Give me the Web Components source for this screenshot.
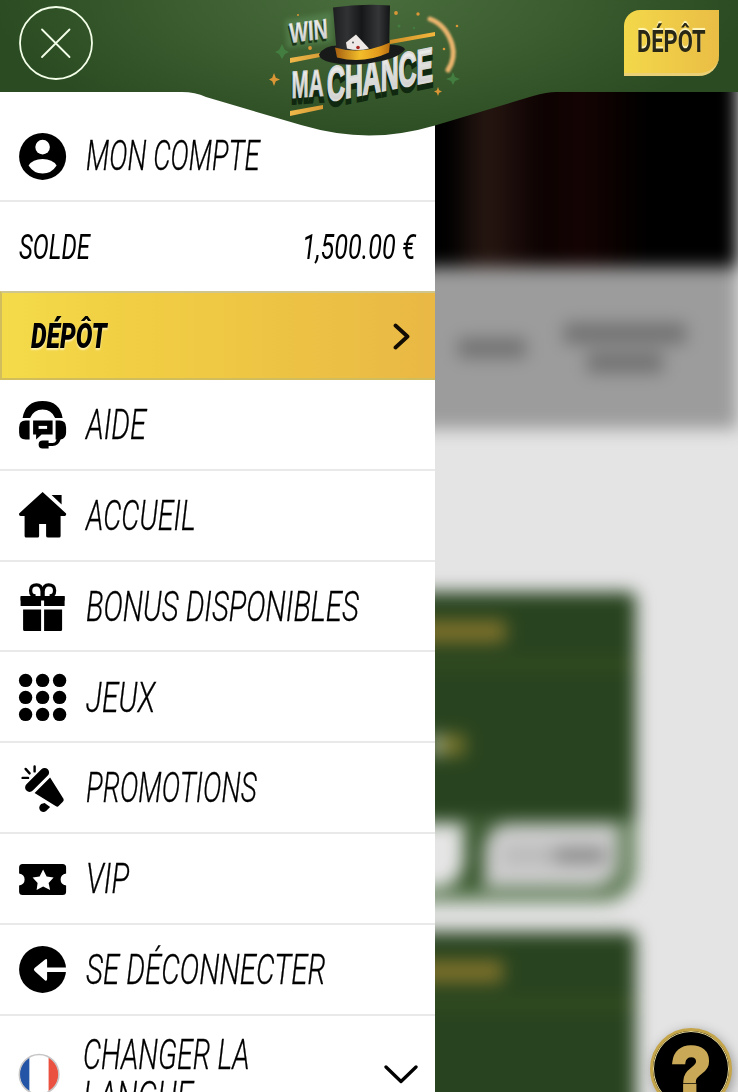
<!DOCTYPE html>
<html lang="fr">
<head>
<meta charset="utf-8">
<title>Win Ma Chance</title>
<style>
html,body{margin:0;height:1092px;overflow:hidden;background:#e4e4e4;font-family:Roboto,"Liberation Sans",sans-serif;color:#000}
</style>
</head>
<body>
<casino-app></casino-app>
<script>
const make=(name,html,init)=>customElements.define(name,class extends HTMLElement{
  connectedCallback(){
    if(this.shadowRoot)return;
    this.attachShadow({mode:'open'}).innerHTML=html;
    if(init)init(this,this.shadowRoot);
  }
});

/* Condenses its text to the width given in the w attribute */
make('fit-text',`<style>
:host{display:block;line-height:1;white-space:nowrap;flex:none}
span{display:inline-block;transform-origin:0 50%}
</style><span><slot></slot></span>`,(el,root)=>{
  const w=+el.getAttribute('w'),s=root.querySelector('span');
  el.style.width=w+'px';
  s.style.transform='scaleX('+w/s.offsetWidth+')';
});

make('brand-logo',`<style>:host{display:block;width:210px;height:135px}svg{display:block;overflow:visible}
text{font-family:"Liberation Sans",sans-serif;font-weight:700}</style>
<svg width="210" height="135" viewBox="0 0 210 135">
<defs>
<linearGradient id="gold"><stop offset="0" stop-color="#f0b84a"/><stop offset=".5" stop-color="#b8791c"/><stop offset="1" stop-color="#f4b63c"/></linearGradient>
<linearGradient id="band"><stop offset="0" stop-color="#a45f10"/><stop offset=".45" stop-color="#f3bd2a"/><stop offset=".8" stop-color="#e29a1c"/><stop offset="1" stop-color="#b66c10"/></linearGradient>
<linearGradient id="hat"><stop offset="0" stop-color="#1d1e1f"/><stop offset=".25" stop-color="#303233"/><stop offset=".5" stop-color="#161718"/><stop offset=".8" stop-color="#343638"/><stop offset="1" stop-color="#131415"/></linearGradient>
<linearGradient id="txt" x2="0" y2="1"><stop offset="0" stop-color="#f4f4f2"/><stop offset="1" stop-color="#c9cac8"/></linearGradient>
<filter id="soft" x="-30%" y="-30%" width="160%" height="160%"><feGaussianBlur stdDeviation="2.5"/></filter>
<filter id="tiny" x="-20%" y="-20%" width="140%" height="140%"><feGaussianBlur stdDeviation=".8"/></filter>
</defs>
<path d="M25 20L72 12V42L27 48Z" fill="#5a8a54" opacity=".6" filter="url(#soft)"/>
<path d="M30 58L60 53V57L30 63ZM130 40L175 32V36L130 44ZM30 111L63 105V109L30 116Z" fill="url(#gold)"/>
<path d="M170 19Q186 25 192 44Q196 58 188 70" fill="none" stroke="#e9b46d" stroke-width="5" stroke-linecap="round" filter="url(#tiny)"/>
<g fill="#db9635"><path d="M14 73l1.800 4.800L20 79.500l-4.200 1.800L14 86l-1.800-4.700L9 79.500l3.200-1.700zM178 87l1.200 3.300 2.800 1.200-2.800 1.200-1.200 3.300-1.200-3.300-2.800-1.200 2.800-1.200z"/><circle cx="136" cy="13" r="1.900"/><circle cx="158" cy="14" r="1.700"/><circle cx="50" cy="48" r="1.900"/><circle cx="197" cy="26" r="1.300"/><circle cx="184" cy="49" r="1.300"/><circle cx="38" cy="15" r="1"/></g>
<g fill="#437d40"><path d="M22 44l3 6 4 2-4 2-3 5-3-5-4-2 4-2zM193 72l2 5 5 2-5 2-2 4-2-4-5-2 5-2z"/><circle cx="139" cy="26" r="1.500"/><circle cx="154" cy="28" r="1.200"/></g>
<g transform="translate(30 43) skewY(-8) skewX(3)" font-size="28"><text y="2.500" x="-1" textLength="38" lengthAdjust="spacingAndGlyphs" fill="#1a3516" stroke="#1a3516">WIN</text><text textLength="38" lengthAdjust="spacingAndGlyphs" fill="url(#txt)" stroke="#dcdddb" stroke-width=".4">WIN</text></g>
<g transform="translate(31.500 98) skewY(-4)" font-size="38"><text y="5" x="0" textLength="32" lengthAdjust="spacingAndGlyphs" fill="#10280f" stroke="#10280f" stroke-width="4">MA</text><text textLength="32" lengthAdjust="spacingAndGlyphs" fill="url(#txt)" stroke="#d4d5d3" stroke-width="1">MA</text></g>
<g transform="translate(67 101.500) skewY(-11)" font-size="48"><text y="5" x="0" textLength="106" lengthAdjust="spacingAndGlyphs" fill="#10280f" stroke="#10280f" stroke-width="4">CHANCE</text><text textLength="106" lengthAdjust="spacingAndGlyphs" fill="url(#txt)" stroke="#d9dad8" stroke-width="2.200">CHANCE</text></g>
<g transform="translate(0 1.500)">
<path d="M59 53Q64 44 78 44L127 43Q143 43 145 48Q139 56 119 60Q94 66 71 61Q59 58 59 53Z" fill="#181a1a"/>
<path d="M73 6Q100 2 130 4L129 51Q102 63 77 55Z" fill="url(#hat)"/>
<path d="M75 46Q101 54 130 41L129 51Q103 63 77 56Z" fill="url(#band)"/>
<path d="M86 41L96 33L109 47Q98 50 87 47Z" fill="#eee9e6"/><circle cx="98" cy="46" r="1.800" fill="#a82520"/><circle cx="93" cy="41" r="1" fill="#555"/>
</g>
</svg>`);

make('site-header',`<style>
:host{display:block;position:absolute;inset:0 0 auto;height:136px;z-index:3}
.bg{position:absolute;inset:0}
.bar{position:relative;display:grid;grid-template-columns:1fr 210px 1fr;height:92px;padding:0 19px;align-items:start}
.close{margin-top:6px}
.dep{box-sizing:border-box;justify-self:end;margin-top:10px;width:95px;height:66px;border-radius:16px 0 20px 0;background:linear-gradient(90deg,#f3d84a,#eabd45);border-bottom:3px solid #e9cf76;display:flex;justify-content:center;padding-top:17px;color:#292716;font:700 30.500px Roboto;text-shadow:0 -2px 1px #fff6c0}
brand-logo{margin-left:-4px}
</style>
<svg class="bg" width="738" height="136"><defs><radialGradient id="g" gradientUnits="userSpaceOnUse" cx="369" cy="-5" r="380" gradientTransform="translate(369 -5) scale(1 .4) translate(-369 5)"><stop offset="0" stop-color="#4a6d3e"/><stop offset=".5" stop-color="#3b5d2f"/><stop offset="1" stop-color="#2b4b22"/></radialGradient></defs>
<path d="M0 0H738V92H556Q547 92 533 96L435 125.500Q401 135.500 369 135.500Q337 135.500 301 125L206 97Q195 92 182 92H0Z" fill="url(#g)"/></svg>
<div class="bar">
<svg class="close" width="74" height="74" fill="none" stroke="#f3ffe8" stroke-linecap="round"><circle cx="37" cy="37" r="36" stroke-width="1.800"/><path d="M23 23.500L50.500 51M50.500 23.500L23 51" stroke-width="1.800"/></svg>
<brand-logo></brand-logo>
<div class="dep"><fit-text w="69">DÉPÔT</fit-text></div>
</div>`);

const icons={
user:'<circle cx="24" cy="24" r="23.500"/><circle cx="24" cy="14.700" r="7.300" fill="#fff"/><path d="M10 33Q14 26.500 24 26.500T38 33Q33 41 24 41T10 33Z" fill="#fff"/>',
help:'<path d="M4 17.500Q7 .7 24 .7T44 17.500H36.500Q33 9 24 9T11.500 17.500Z"/><path d="M11 20v19H7Q.5 39 .5 32V27Q.5 20 7 20ZM37 20h4Q47.500 20 47.500 27v5q0 6-5.500 7Q40 45.500 34 45.500h-4V48H24q-4 0-4-4t4-4h6v2.500h4Q37 42.500 38 39H37ZM14.500 20H34V34H23L17.500 39V34H14.500Z"/><path d="M20 25.500h8.500v3H20Z" fill="#fff"/>',
home:'<path d="M24 .7L47.500 22Q48 24.700 46 24.700H42V44.500Q42 46 40.500 46H29.500Q27.500 46 27.500 44.500V32.500H20.500V44.500Q20.500 46 19 46H7.500Q6 46 6 44.500V24.700H2Q0 24.700 .5 22ZM33 3.500H43V13Z"/>',
gift:'<path d="M3 13.500H22.500V23.500H2V14.500ZM25.500 13.500H45.500L46 14.500V23.500H25.500ZM4.500 27H22.500V48.500H6Q4.500 48.500 4.500 47ZM25.500 27H43.500V47Q43.500 48.500 42 48.500H25.500Z"/><path d="M2 13.500H46V18H2Z"/><path d="M17 13.500Q12 13.500 12 8Q12 2.500 18 2.500Q23 2.500 23.500 9V13.500M31 13.500Q36 13.500 36 8Q36 2.500 30 2.500Q25 2.500 24.500 9V13.500" fill="none" stroke="#000" stroke-width="3.300"/>',
games:[7,24,41].map(y=>[7,24,41].map(x=>`<circle cx="${x}" cy="${y}" r="6.700"/>`).join('')).join(''),
promo:'<path d="M11 23L26 8" fill="none" stroke="#000" stroke-width="9" stroke-linecap="round"/><path d="M16 28.500L31.500 13L45 34.500Q45.500 36.500 44 37.500L40 41.500Q39 43 37 41.500ZM22.500 39.500L26 38.500L31.500 42.500L27.500 46.500Q25 48.500 22 46.500Q19 43 22.500 39.500Z"/><path d="M16 2V7M7 4.500L11 9M4 13.500H9.500" fill="none" stroke="#000" stroke-width="2.400" stroke-linecap="round"/>',
vip:'<path d="M4 8.500H44Q47.500 8.500 47.500 12V18Q42 19 42 24T47.500 30V36Q47.500 39.500 44 39.500H4Q.5 39.500 .5 36V30Q6 29 6 24T.5 18V12Q.5 8.500 4 8.500Z"/><path d="M24.500 14L28 21L35 22L30 27.500L31.500 34.500L24.500 31L18 34.500L19 27.500L14 22L21 21Z" fill="#fff"/>',
out:'<circle cx="24" cy="24" r="23.500"/><path d="M48 22H28.500V15Q28.500 13 26.500 14L16 22.500Q14.500 24 16 25.500L26.500 35Q28.500 36 28.500 33V26.500H48Z" fill="#fff"/>',
flag:'<defs><clipPath id="c"><circle cx="20.500" cy="23" r="19.500"/></clipPath></defs><g clip-path="url(#c)"><path d="M0 3H11V43H0Z" fill="#2454a5"/><path d="M11 3H30V43H11Z" fill="#fff"/><path d="M30 3H42V43H30Z" fill="#eb5140"/></g><circle cx="20.500" cy="23" r="19.800" fill="none" stroke="#c7c5c5" stroke-width="1.500"/>'
};
make('menu-icon',`<style>:host{display:block;width:48px;height:48px;flex:none}svg{display:block;overflow:visible}</style><svg width="48" height="48" viewBox="-.6 -.4 48 48"></svg>`,(el,r)=>{r.querySelector('svg').innerHTML=icons[el.getAttribute('name')]});

make('menu-row',`<style>
:host{box-sizing:border-box;display:flex;align-items:center;height:90.830px;padding:0 18px;border-bottom:2px solid #e9e9e9;font-size:41.500px;font-style:italic;font-weight:300;-webkit-text-stroke:.3px #000}
.label{padding:1px 0 0 20px;flex:1}
</style><slot name="icon"></slot><div class="label"><slot></slot></div><slot name="end"></slot>`,(el,r)=>{
  r.querySelector('slot').innerHTML='<menu-icon name="'+el.getAttribute('icon')+'"></menu-icon>';
});

make('side-menu',`<style>
:host{box-sizing:border-box;display:flex;flex-direction:column;position:relative;z-index:2;width:435px;height:1092px;padding-top:92px;background:#fff;overflow:hidden}
menu-row{flex:none}
.account{height:110px;padding-top:19px}
.balance,.deposit{box-sizing:border-box;display:flex;flex:none;align-items:center;justify-content:space-between;font-style:italic}
.balance{height:88.500px;padding:1px 19px 0 19px;font-size:34.500px;font-weight:400}
.deposit{height:89.500px;border:2px solid #d2bd5c;border-right:0;border-top-color:#cfc58e;background:linear-gradient(90deg,#f4db49,#f1ce43 30%,#e9b845);padding:2px 25px 0 29px;font-size:35px;font-weight:900;text-shadow:0 2px 2px #fff1ae}
.lang{height:118px;border:0}
.lang svg{flex:none;margin-right:-1px}
.two{display:grid;gap:.5px;margin-left:-3px}
</style>
<menu-row class="account" icon="user"><fit-text w="174">MON COMPTE</fit-text></menu-row>
<div class="balance"><fit-text w="71">SOLDE</fit-text><fit-text w="114">1,500.00 €</fit-text></div>
<div class="deposit"><fit-text w="76">DÉPÔT</fit-text><svg width="17" height="27" fill="none" stroke="#120c02" stroke-width="3.800" stroke-linecap="round" stroke-linejoin="round"><path d="M2.500 2.500L14.500 13.500L2.500 24.500"/></svg></div>
<menu-row icon="help"><fit-text w="60">AIDE</fit-text></menu-row>
<menu-row icon="home"><fit-text w="110">ACCUEIL</fit-text></menu-row>
<menu-row icon="gift"><fit-text w="273">BONUS DISPONIBLES</fit-text></menu-row>
<menu-row icon="games"><fit-text w="69">JEUX</fit-text></menu-row>
<menu-row icon="promo"><fit-text w="171">PROMOTIONS</fit-text></menu-row>
<menu-row icon="vip"><fit-text w="43">VIP</fit-text></menu-row>
<menu-row icon="out"><fit-text w="240">SE DÉCONNECTER</fit-text></menu-row>
<menu-row icon="flag" class="lang"><div class="two"><fit-text w="167">CHANGER LA</fit-text><fit-text w="110">LANGUE</fit-text></div><svg slot="end" width="34" height="20" fill="none" stroke="#000" stroke-width="3.300" stroke-linecap="round" stroke-linejoin="round"><path d="M2 2L17 16.500L32 2"/></svg></menu-row>`);

make('promo-card',`<style>
:host{box-sizing:border-box;display:flex;flex-direction:column;width:560px;height:310px;margin-left:76px;border-radius:6px 6px 32px 0;background:linear-gradient(#28431f 73%,#64805b 74%)}
.title{height:74px;padding-top:28px;box-sizing:border-box;border-bottom:4px solid #455a20}
.title i{display:block;width:110px;height:23px;margin-left:320px;background:#7b702a}
.body{display:flex;height:158px;padding:68px 0 0 355px;box-sizing:border-box}
.body i{width:34px;height:22px;background:#76742c;border-left:9px solid #b8c4b5;box-sizing:border-box}
.buttons{display:flex;gap:20px;padding-left:255px;width:287px;background:linear-gradient(90deg,#315126 0 95%,transparent)}
.buttons b{display:block;height:63px;width:134px;background:#e5e5e5;border-radius:25px 0 25px 0}
.buttons b+b{display:flex;align-items:center;justify-content:flex-end;padding-right:12px;box-sizing:border-box;background:#ccc}
.buttons b+b i{width:102px;height:15px;background:linear-gradient(90deg,#b7b7b7 45%,#868686 55%)}
:host([plain]) .body i{visibility:hidden}
</style><div class="title"><i></i></div><div class="body"><i></i></div><div class="buttons"><b></b><b><i></i></b></div>`);

/* Page content behind the menu, out of focus while the menu is open */
make('page-backdrop',`<style>
:host{display:flex;flex-direction:column;position:absolute;inset:0;z-index:0;filter:blur(8.500px)}
.hero{height:267px;flex:none;background:linear-gradient(90deg,#000 0 61%,#241510 65% 67%,#180a08 70%,#0b0201 74%,#130303 77% 80%,#080100 84%,#000 88%)}
.tabs{height:162px;flex:none;background:#9c9c9c;display:flex;align-items:center;justify-content:flex-end;gap:38px;padding-right:52px;box-sizing:border-box}
.tabs i{display:block;width:68px;height:20px;background:#727272}
.tabs div{display:grid;justify-items:center;gap:8px;width:122px}
.tabs div i{width:122px;height:21px}
.tabs div i+i{width:76px}
.cards{display:grid;gap:30px;padding-top:163px}
.cards promo-card+promo-card{margin-left:73px;width:563px}
</style><div class="hero"></div><div class="tabs"><i></i><div><i></i><i></i></div></div><div class="cards"><promo-card></promo-card><promo-card plain></promo-card></div>`);

make('help-badge',`<style>
:host{box-sizing:border-box;display:flex;justify-content:center;position:absolute;left:650px;top:1028px;width:82px;height:82px;z-index:4;border-radius:50%;background:#000;border:3px solid #c5a54a;box-shadow:inset 0 0 0 1px #eee0a0,2px 3px 12px #999}
span{font:700 69px/1 "Liberation Sans",sans-serif;color:#c9a957;-webkit-text-stroke:4.500px #c9a957;margin-top:6px;transform:scaleX(.93)}
</style><span>?</span>`);

make('casino-app',`<style>:host{display:block;position:relative;width:738px;height:1092px;overflow:hidden}</style>
<page-backdrop></page-backdrop><side-menu></side-menu><site-header></site-header><help-badge></help-badge>`);
</script>
</body>
</html>
